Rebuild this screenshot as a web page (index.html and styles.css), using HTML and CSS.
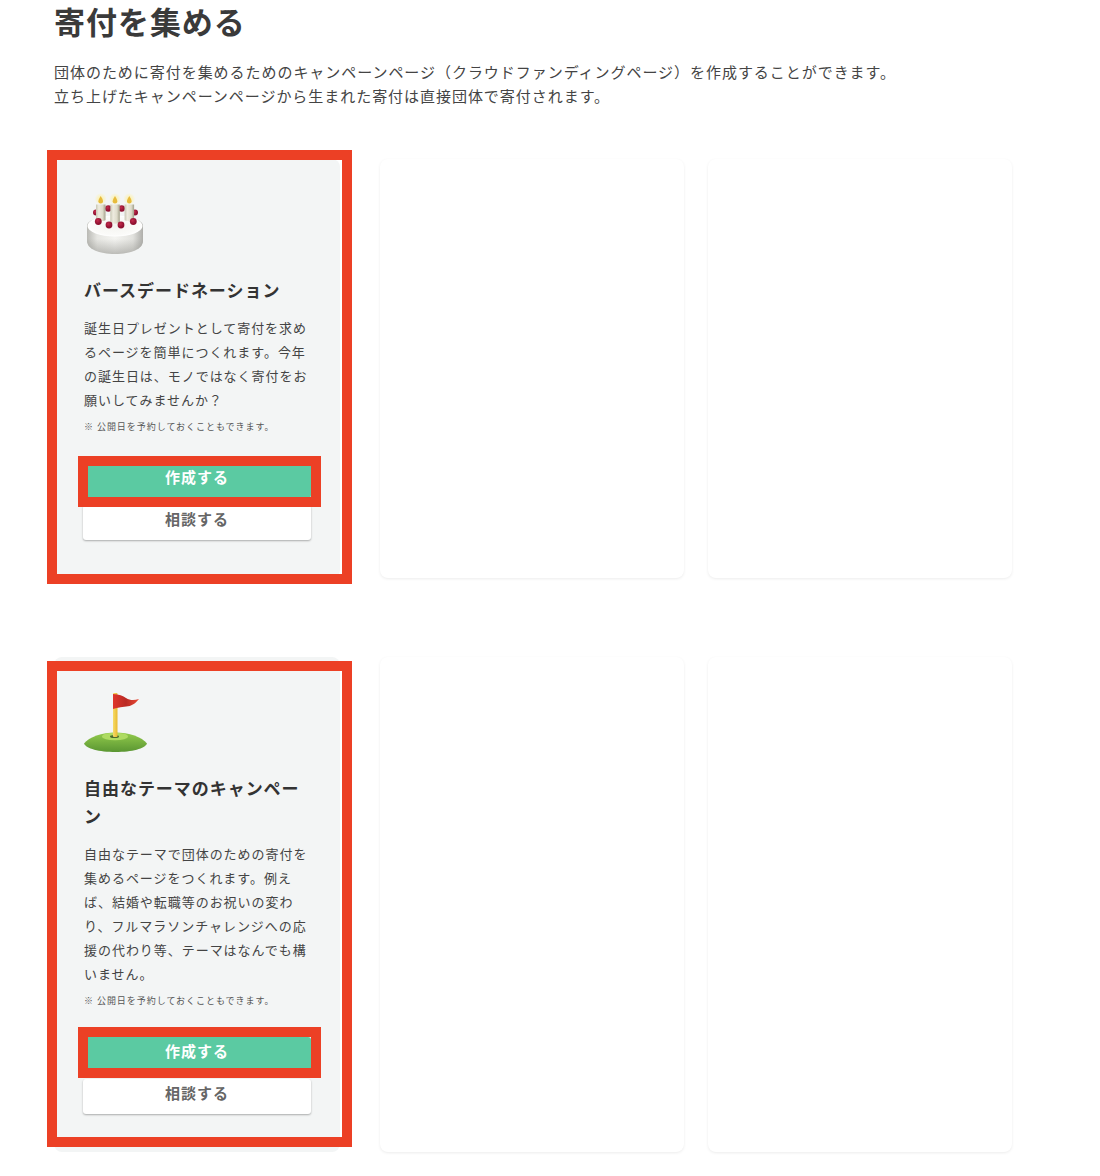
FILE: index.html
```html
<!DOCTYPE html>
<html lang="ja">
<head>
    <meta charset="UTF-8">
    <meta name="viewport" content="width=device-width, initial-scale=1.0">
    <title>寄付を集める</title>
    <link rel="stylesheet" href="styles.css">
</head>
<body>
    <div class="page">
        <h1>寄付を集める</h1>
        <p class="lead">団体のために寄付を集めるためのキャンペーンページ（クラウドファンディングページ）を作成することができます。<br>立ち上げたキャンペーンページから生まれた寄付は直接団体で寄付されます。</p>

        <div class="row row-first">
            <div class="card card-main">
                <span class="mark mark-card-first"></span>
                <svg class="emoji" viewBox="0 0 64 64" aria-hidden="true">
                    <defs>
                        <linearGradient id="cakeSide" x1="0" y1="0" x2="1" y2="0">
                            <stop offset="0" stop-color="#b9b9b4"/>
                            <stop offset="0.18" stop-color="#e6e6e2"/>
                            <stop offset="0.5" stop-color="#f4f4f1"/>
                            <stop offset="0.82" stop-color="#e2e2de"/>
                            <stop offset="1" stop-color="#aeaeaa"/>
                        </linearGradient>
                        <linearGradient id="cakeShade" x1="0" y1="0" x2="0" y2="1">
                            <stop offset="0.6" stop-color="#8f8f8a" stop-opacity="0"/>
                            <stop offset="1" stop-color="#8f8f8a" stop-opacity="0.55"/>
                        </linearGradient>
                        <radialGradient id="cakeTop">
                            <stop offset="0" stop-color="#f4f4f0"/>
                            <stop offset="0.85" stop-color="#fbfbf9"/>
                            <stop offset="1" stop-color="#ffffff"/>
                        </radialGradient>
                        <linearGradient id="candle" x1="0" y1="0" x2="1" y2="0">
                            <stop offset="0" stop-color="#c9c7b4"/>
                            <stop offset="0.3" stop-color="#eeebdf"/>
                            <stop offset="0.7" stop-color="#dedbca"/>
                            <stop offset="1" stop-color="#a3a08a"/>
                        </linearGradient>
                        <radialGradient id="berry" cx="0.4" cy="0.35">
                            <stop offset="0" stop-color="#c42a4c"/>
                            <stop offset="1" stop-color="#8f1231"/>
                        </radialGradient>
                        <radialGradient id="glow">
                            <stop offset="0" stop-color="#fff09a" stop-opacity="0.95"/>
                            <stop offset="1" stop-color="#fff09a" stop-opacity="0"/>
                        </radialGradient>
                    </defs>
                    <path d="M3 33c0-6 12-10 28-10s28 4 28 10v15c0 8-12 13-28 13S3 56 3 48z" fill="url(#cakeSide)"/>
                    <path d="M3 33c0-6 12-10 28-10s28 4 28 10v15c0 8-12 13-28 13S3 56 3 48z" fill="url(#cakeShade)"/>
                    <ellipse cx="31" cy="33" rx="27.500" ry="10.500" fill="url(#cakeTop)"/>
                    <circle cx="12" cy="19.500" r="3" fill="url(#berry)"/>
                    <circle cx="51" cy="19.500" r="3" fill="url(#berry)"/>
                    <circle cx="24.300" cy="15.500" r="3.200" fill="url(#berry)"/>
                    <circle cx="37.700" cy="15.500" r="3.200" fill="url(#berry)"/>
                    <circle cx="16.700" cy="6" r="6" fill="url(#glow)"/>
                    <circle cx="31" cy="6" r="6" fill="url(#glow)"/>
                    <circle cx="45.300" cy="6" r="6" fill="url(#glow)"/>
                    <path d="M12 11.500h9.500v15.500c0 1.500-9.500 1.500-9.500 0z" fill="url(#candle)"/>
                    <path d="M26.300 11.500h9.500v18c0 1.500-9.500 1.500-9.500 0z" fill="url(#candle)"/>
                    <path d="M40.600 11.500h9.500v15.500c0 1.500-9.500 1.500-9.500 0z" fill="url(#candle)"/>
                    <path d="M16.700 3c1.500 2.500 2.300 4 2.300 5.200 0 1.300-1 2.300-2.300 2.300s-2.300-1-2.300-2.300c0-1.200.8-2.700 2.300-5.200z" fill="#e7bb3c"/>
                    <path d="M31 3c1.500 2.500 2.300 4 2.300 5.200 0 1.300-1 2.300-2.300 2.300s-2.300-1-2.300-2.300c0-1.200.8-2.700 2.300-5.200z" fill="#e7bb3c"/>
                    <path d="M45.300 3c1.500 2.500 2.300 4 2.300 5.200 0 1.300-1 2.300-2.300 2.300s-2.300-1-2.300-2.300c0-1.200.8-2.700 2.300-5.200z" fill="#e7bb3c"/>
                    <circle cx="14.300" cy="28.500" r="3.400" fill="url(#berry)"/>
                    <circle cx="25" cy="32" r="3.400" fill="url(#berry)"/>
                    <circle cx="37" cy="32" r="3.400" fill="url(#berry)"/>
                    <circle cx="49.300" cy="28.500" r="3.400" fill="url(#berry)"/>
                </svg>
                <h2>バースデードネーション</h2>
                <p class="desc">誕生日プレゼントとして寄付を求めるページを簡単につくれます。今年の誕生日は、モノではなく寄付をお願いしてみませんか？</p>
                <p class="note">※ 公開日を予約しておくこともできます。</p>
                <div class="actions">
                    <a class="btn btn-create">作成する<span class="mark mark-btn-first"></span></a>
                    <a class="btn btn-consult">相談する</a>
                </div>
            </div>
            <div class="card"></div>
            <div class="card"></div>
        </div>

        <div class="row">
            <div class="card card-main">
                <span class="mark mark-card-second"></span>
                <svg class="emoji" viewBox="0 0 64 64" aria-hidden="true">
                    <defs>
                        <linearGradient id="pole" x1="0" y1="0" x2="1" y2="0">
                            <stop offset="0" stop-color="#f6dc6a"/>
                            <stop offset="1" stop-color="#e9b92f"/>
                        </linearGradient>
                        <linearGradient id="flag" x1="0" y1="0" x2="1" y2="0">
                            <stop offset="0" stop-color="#e0352b"/>
                            <stop offset="0.5" stop-color="#b92a24"/>
                            <stop offset="1" stop-color="#ea4a35"/>
                        </linearGradient>
                        <linearGradient id="mound" x1="0" y1="0" x2="0" y2="1">
                            <stop offset="0" stop-color="#93cb4c"/>
                            <stop offset="1" stop-color="#5a9632"/>
                        </linearGradient>
                    </defs>
                    <path d="M0 52.500C5 46 18 41.500 31.500 41.500S58 46 63 52.500C61 57.500 48 61 31.500 61S2 57.500 0 52.500z" fill="url(#mound)"/>
                    <ellipse cx="31" cy="45.500" rx="13" ry="3.800" fill="#aedb62"/>
                    <ellipse cx="30.500" cy="45.500" rx="4.500" ry="1.500" fill="#4c6b2c"/>
                    <rect x="29" y="2" width="4.500" height="44" rx="1" fill="url(#pole)"/>
                    <path d="M29 3c6 .3 10 2 13 4 4 2.500 8 2.500 13 1-3 3.500-6 6.500-11 7.300-5 .7-10 1-15 2.700z" fill="url(#flag)"/>
                </svg>
                <h2>自由なテーマのキャンペーン</h2>
                <p class="desc">自由なテーマで団体のための寄付を集めるページをつくれます。例えば、結婚や転職等のお祝いの変わり、フルマラソンチャレンジへの応援の代わり等、テーマはなんでも構いません。</p>
                <p class="note">※ 公開日を予約しておくこともできます。</p>
                <div class="actions">
                    <a class="btn btn-create">作成する<span class="mark mark-btn-second"></span></a>
                    <a class="btn btn-consult">相談する</a>
                </div>
            </div>
            <div class="card"></div>
            <div class="card"></div>
        </div>
    </div>
</body>
</html>
```

FILE: styles.css
```css
body {
    margin: 0;
    background-color: #fff;
    color: #333;
    font-family: "Noto Sans CJK JP", "Noto Sans", sans-serif;
    letter-spacing: 0.06em;
}
.page {
    padding-left: 54px;
    height: 1176px;
    overflow: hidden;
}
h1 {
    margin: 0;
    font-size: 31px;
    line-height: 42px;
    font-weight: 700;
    color: #3a3a3a;
}
.lead {
    margin: 18px 0 51px;
    font-size: 15px;
    line-height: 24px;
    color: #444;
    white-space: nowrap;
}
.row {
    display: grid;
    grid-template-columns: 302px 304px 304px;
    column-gap: 24px;
}
.row-first {
    margin-bottom: 79px;
}
.card {
    position: relative;
    background-color: #fff;
    border-radius: 8px;
    box-shadow: 0 1px 3px rgba(0, 0, 0, 0.08);
}
.card-main {
    margin-right: 16px;
    padding: 34px 29px 38px;
    background-color: #f3f5f5;
    box-shadow: none;
}
.emoji {
    display: block;
    width: 64px;
    height: 64px;
    margin: 0 0 19px 1px;
}
h2 {
    margin: 0 0 12px;
    padding-left: 1px;
    font-size: 17px;
    line-height: 28px;
    font-weight: 700;
}
.desc {
    margin: 0 0 8px;
    padding-left: 1px;
    font-size: 13px;
    line-height: 24px;
    color: #444;
}
.note {
    margin: 0 0 29px;
    padding-left: 1px;
    font-size: 9px;
    line-height: 14px;
    color: #555;
    white-space: nowrap;
}
.actions {
    display: flex;
    flex-direction: column;
    gap: 7px;
}
.btn {
    display: block;
    height: 35px;
    line-height: 28px;
    border-radius: 3px;
    text-align: center;
    font-size: 15px;
    font-weight: 700;
}
.btn-create {
    position: relative;
    background-color: #5bcaa2;
    color: #fff;
}
.btn-consult {
    background-color: #fff;
    color: #666;
    box-shadow: 0 1px 2px rgba(0, 0, 0, 0.3);
}

/* red annotation boxes drawn over the screenshot */
.mark {
    position: absolute;
    box-sizing: border-box;
    border: 10px solid #ec4025;
    pointer-events: none;
}
.mark-card-first {
    top: -9px;
    right: -12px;
    bottom: -6px;
    left: -7px;
}
.mark-card-second {
    top: 4px;
    right: -12px;
    bottom: 5px;
    left: -7px;
}
.mark-btn-first {
    top: -7px;
    right: -10px;
    bottom: -9px;
    left: -5px;
}
.mark-btn-second {
    top: -10px;
    right: -10px;
    bottom: -6px;
    left: -5px;
}
```
